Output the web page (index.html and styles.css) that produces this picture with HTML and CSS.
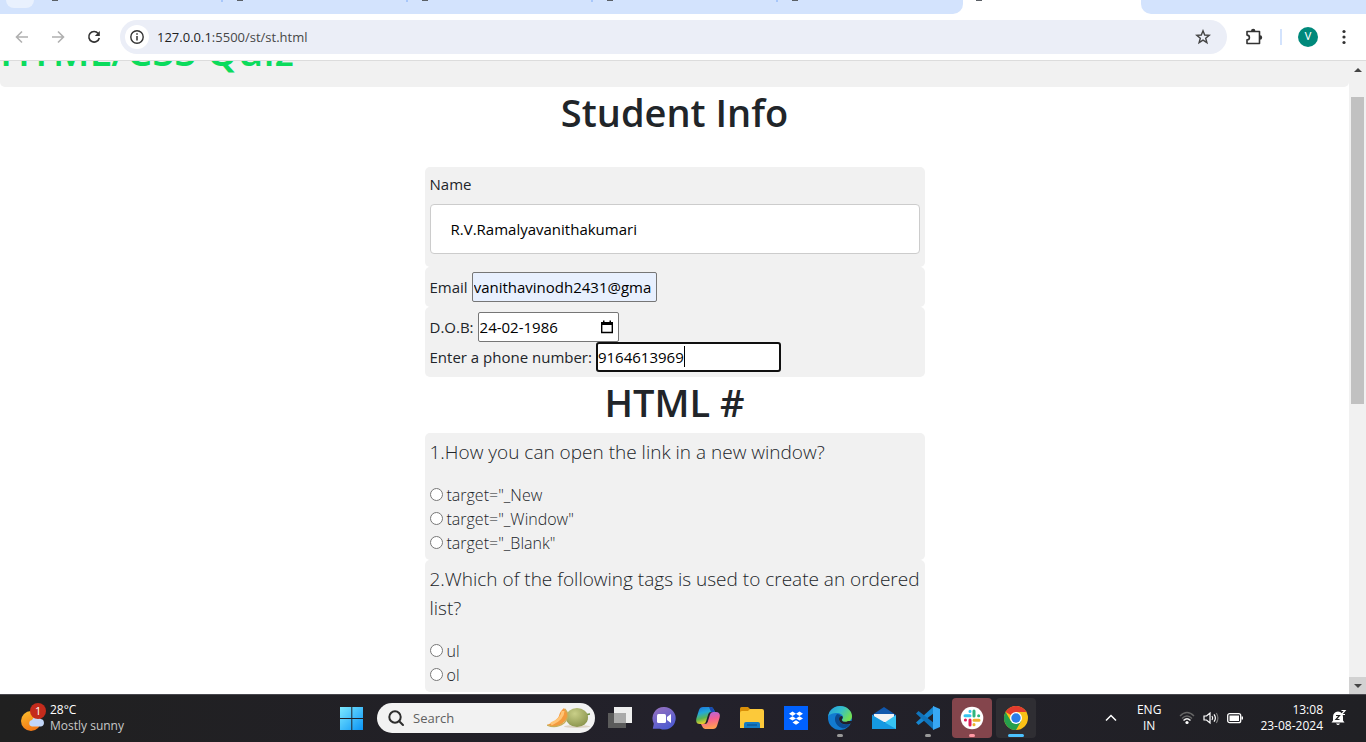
FILE: index.html
```html
<!DOCTYPE html>
<html lang="en">
<head>
<meta charset="utf-8">
<title>HTML/CSS Quiz</title>
<link rel="stylesheet" href="styles.css">
</head>
<body>
<div class="desktop">
  <div class="tabstrip">
    <span class="tab-search"></span>
    <div class="tabs">
      <span class="tab"></span><span class="tab"></span><span class="tab"></span><span class="tab"></span><span class="tab tab-last"></span>
    </div>
    <span class="tab-active"></span>
    <span class="tab-rest"></span>
  </div>
  <div class="toolbar">
    <button class="tool" aria-label="Back"><svg width="16" height="16" viewBox="0 0 16 16" fill="none" stroke="#b0b0b0" stroke-width="1.6"><path d="M14 8H3M8 2.5 2.5 8 8 13.5"/></svg></button>
    <button class="tool" aria-label="Forward"><svg width="16" height="16" viewBox="0 0 16 16" fill="none" stroke="#b0b0b0" stroke-width="1.6"><path d="M2 8h11M8 2.5 13.5 8 8 13.5"/></svg></button>
    <button class="tool" aria-label="Reload"><svg width="16" height="16" viewBox="0 0 16 16"><path d="M12.2 4.4A5.300 5.300 0 1 0 13.300 9" fill="none" stroke="#333" stroke-width="1.600"/><path d="M13.800 2v5H8.800z" fill="#333"/></svg></button>
    <div class="omnibox">
      <button class="site-info" aria-label="Site information"><svg width="16" height="16" viewBox="0 0 16 16"><circle cx="8" cy="8" r="6.200" fill="none" stroke="#333" stroke-width="1.400"/><path d="M8 7v4.500M8 4.300v1.500" stroke="#333" stroke-width="1.500"/></svg></button>
      <div class="url"><span class="host">127.0.0.1</span>:5500/st/st.html</div>
      <button class="star" aria-label="Bookmark"><svg width="16" height="16" viewBox="0 0 16 16"><path d="m8 1.800 1.700 4.200 4.500.3-3.500 2.900 1.200 4.500L8 11.200l-3.900 2.500 1.200-4.500-3.500-2.900 4.500-.3z" fill="none" stroke="#444" stroke-width="1.400"/></svg></button>
    </div>
    <button class="tool ext" aria-label="Extensions"><svg width="18" height="18" viewBox="0 0 18 18"><path d="M2 3.500h12.500v12H2v-3.600c3.200 0 3.200-4.800 0-4.800z" fill="none" stroke="#333" stroke-width="1.600" stroke-linejoin="round"/><path d="M6 3a2.200 2.200 0 0 1 4.400 0zM15 7.300a2.200 2.200 0 0 1 0 4.400z" fill="#333"/></svg></button>
    <span class="divider"></span>
    <button class="avatar" aria-label="Profile">V</button>
    <button class="tool menu" aria-label="Menu"><svg width="16" height="16" viewBox="0 0 16 16" fill="#333"><circle cx="8" cy="2.500" r="1.600"/><circle cx="8" cy="8" r="1.600"/><circle cx="8" cy="13.500" r="1.600"/></svg></button>
  </div>

  <div class="viewport">
    <main class="page">
      <header class="banner"><h1 class="banner-title">HTML/CSS Quiz</h1></header>
      <h1 class="heading heading-info">Student Info</h1>
      <form class="quiz">
        <div class="panel">
          <label class="line" for="name">Name</label>
          <input class="name" id="name" type="text" value="R.V.Ramalyavanithakumari">
        </div>
        <div class="panel">
          <div class="row"><label for="email">Email</label><input class="field email" id="email" type="text" value="vanithavinodh2431@gma"></div>
        </div>
        <div class="panel">
          <div class="row"><label for="dob">D.O.B:</label>
            <span class="field date"><input class="date-text" id="dob" type="text" value="24-02-1986"><button class="date-pick" type="button" aria-label="Open calendar"><svg width="14" height="14" viewBox="0 0 14 14"><path d="M1.700 3.500h10.600v9H1.700z" fill="none" stroke="#000" stroke-width="1.400"/><path d="M1 2h12v3H1zM3 .5h1.500V2H3zM9.500.5H11V2H9.500z"/></svg></button></span>
          </div>
          <div class="row"><label for="phone">Enter a phone number:</label><span class="phone-box"><input class="field phone" id="phone" type="text" value="9164613969"><span class="caret"></span></span></div>
        </div>
        <h1 class="heading">HTML #</h1>
        <div class="panel">
          <p class="question">1.How you can open the link in a new window?</p>
          <label class="option"><input class="radio" type="radio" name="q1">target="_New</label>
          <label class="option"><input class="radio" type="radio" name="q1">target="_Window"</label>
          <label class="option"><input class="radio" type="radio" name="q1">target="_Blank"</label>
        </div>
        <div class="panel">
          <p class="question">2.Which of the following tags is used to create an ordered list?</p>
          <label class="option"><input class="radio" type="radio" name="q2">ul</label>
          <label class="option"><input class="radio" type="radio" name="q2">ol</label>
        </div>
      </form>
    </main>
    <div class="scrollbar">
      <span class="arrow"><svg width="8" height="4" viewBox="0 0 8 4"><path d="M4 0l4 4H0z" fill="#444"/></svg></span>
      <div class="track"><span class="thumb"></span></div>
      <span class="arrow arrow-down"><svg width="8" height="4" viewBox="0 0 8 4"><path d="M0 0h8L4 4z" fill="#444"/></svg></span>
    </div>
  </div>

  <footer class="taskbar">
    <div class="weather">
      <svg width="26" height="30" viewBox="0 0 26 30"><defs><linearGradient id="sun" x2="0.400" y2="1"><stop stop-color="#fbbf2d"/><stop offset="1" stop-color="#f47a16"/></linearGradient></defs><circle cx="10" cy="18" r="10" fill="url(#sun)"/><path d="M11 23.500a3.300 3.300 0 0 1 0-6.500 4.500 4.500 0 0 1 8-1 3.800 3.800 0 0 1 1 7.500z" fill="#c3d7f8"/><circle cx="17" cy="8" r="8" fill="#c42b1c"/><text x="14" y="12" class="badge-text">1</text></svg>
      <div class="weather-text"><span class="temp">28°C</span><span class="sky">Mostly sunny</span></div>
    </div>
    <div class="apps">
      <button class="app" aria-label="Start"><svg width="24" height="24" viewBox="0 0 24 24"><defs><linearGradient id="win" x2="1" y2="1"><stop stop-color="#7deaff"/><stop offset="1" stop-color="#0a94f5"/></linearGradient></defs><path d="M0 1h11.300v11H0zM12.300 1H23v11H12.300zM0 13h11.300v11H0zM12.300 13H23v11H12.300z" fill="url(#win)"/></svg></button>
      <div class="search">
        <svg width="18" height="18" viewBox="0 0 18 18" fill="none" stroke="#2d2d2d" stroke-width="2" stroke-linecap="round"><circle cx="8" cy="8" r="5.700"/><path d="m12.200 12.200 3.800 3.800"/></svg>
        <input class="search-input" type="text" aria-label="Search" placeholder="Search">
        <svg width="44" height="22" viewBox="0 0 44 22"><defs><radialGradient id="melon" cx=".4" cy=".3" r=".8"><stop stop-color="#c9cf88"/><stop offset="1" stop-color="#858f48"/></radialGradient></defs><ellipse cx="30" cy="19.500" rx="13" ry="1.500" fill="#ddd3c5"/><path d="M38 9q2-2 5-2" fill="none" stroke="#6b8a43" stroke-width="1.600"/><ellipse cx="30" cy="10.500" rx="11" ry="9.500" fill="url(#melon)"/><path d="M17 1q7 7 0 14-7 7-17 3 10-4 12-9 1-5 5-8z" fill="#f39a3e"/><path d="M16 4q0 8-12 13" fill="none" stroke="#ffc475" stroke-width="3"/><path d="M0 18q9 4 17-2 7-7 1-14" fill="none" stroke="#c7ae58" stroke-width="1.200"/></svg>
      </div>
      <button class="app" aria-label="Task view"><svg width="24" height="24" viewBox="0 0 24 24"><path d="M6 1h18v16H6z" fill="#eee"/><path d="M0 7h18v15H0z" fill="#5b5b5b"/><path d="M6 7h12v10H6z" fill="#aaa"/></svg></button>
      <button class="app" aria-label="Chat"><svg width="24" height="24" viewBox="0 0 24 24"><defs><linearGradient id="chat" x2="0.500" y2="1"><stop stop-color="#9b72bd"/><stop offset="1" stop-color="#4f5bd0"/></linearGradient></defs><path d="M12 1a11.300 11.300 0 1 1-4 21.700H.8l1-5A11.300 11.300 0 0 1 12 1z" fill="url(#chat)"/><rect x="5" y="8" width="9" height="9" rx="1.500" fill="#fff"/><path d="m15 11 4-3v9l-4-3z" fill="#fff"/></svg></button>
      <button class="app" aria-label="Copilot"><svg width="24" height="24" viewBox="0 0 24 24"><defs><linearGradient id="cpa" x2="0.300" y2="1"><stop stop-color="#1b70dd"/><stop offset=".4" stop-color="#23a9d7"/><stop offset=".7" stop-color="#5cb551"/><stop offset="1" stop-color="#f1cf28"/></linearGradient><linearGradient id="cpb" x2="0.200" y2="1"><stop stop-color="#a667ec"/><stop offset=".5" stop-color="#f45f94"/><stop offset="1" stop-color="#ff9d53"/></linearGradient></defs><path d="M7 1h8q2 0 3 3l1 2h-4q-2 0-2.700 2L10 15.500Q9.500 18 7 18H4q-5 0-3.500-6L3 4q1-3 4-3z" fill="url(#cpa)"/><path d="M17 23H9q-2 0-3-3l-1-2h4q2 0 2.700-2L14 8.500Q14.500 6 17 6h3q5 0 3.500 6L21 20q-1 3-4 3z" fill="url(#cpb)"/><path d="M13 1h2q2 0 3 3l1 2h-4z" fill="#1b49b0"/></svg></button>
      <button class="app" aria-label="File Explorer"><svg width="24" height="24" viewBox="0 0 24 24"><path d="M0 2.500Q0 1 1.500 1H8l2 2v4H0z" fill="#d98f08"/><path d="M0 7q0-2 2-2h6l2-2h12q2 0 2 2v17H0z" fill="#fcc93a"/><path d="M4 22v-4q0-2 2-2h12q2 0 2 2v4z" fill="#147bc4"/><path d="M7 19h10" stroke="#0c599b" stroke-width="1.500"/></svg></button>
      <button class="app" aria-label="Dropbox"><svg width="24" height="24" viewBox="0 0 24 24"><path d="M0 0h24v24H0z" fill="#0061fe"/><path d="m8.500 5.500 3.500 2.200-3.500 2.200L5 7.700zM15.500 5.500 19 7.700l-3.500 2.200L12 7.700zM8.500 10.200l3.500 2.200-3.500 2.200L5 12.400zM15.500 10.200l3.500 2.200-3.500 2.200-3.500-2.200zM12 14.300l3.500 2.200L12 18.700l-3.500-2.200z" fill="#fff"/></svg></button>
      <button class="app running" aria-label="Edge"><svg width="24" height="24" viewBox="0 0 24 24"><defs><linearGradient id="edge" x1="0" y1="0" x2="1" y2=".5"><stop stop-color="#249bdf"/><stop offset=".55" stop-color="#35bfc9"/><stop offset="1" stop-color="#72df54"/></linearGradient></defs><circle cx="12" cy="12" r="12" fill="#127bd0"/><path d="M0 11C1 4 6 0 12 0c7 0 12 5 12 10 0 4-3 6-6 6-3 0-4-1-4-2 0-1 1-1 1-3 0-2-3-4-6-4-4 0-8 1-9 4z" fill="url(#edge)"/><path d="M9 8c-4 4-2 12 5 14 3 1 6-1 8-4-6 2-11-1-11-5 0-2 1-3 2-3q-1-2-4-2z" fill="#0b4b91"/><path d="M11 13c0 4 5 7 12 4.500l1.500-2.500H20c-4 2-7 0-6-2 1-1 1-2 0-3-2 0-3 1-3 3z" fill="#22202a"/></svg></button>
      <button class="app" aria-label="Mail"><svg width="24" height="24" viewBox="0 0 24 24"><path d="M0 9 12 1l12 8v3H0z" fill="#1057ac"/><path d="M2 8h20v8H2z" fill="#f1f1f3"/><path d="M0 9v14h24V9l-12 8z" fill="#36c4f3"/><path d="m0 9 24 14H0z" fill="#1599e1"/></svg></button>
      <button class="app running" aria-label="Visual Studio Code"><svg width="24" height="24" viewBox="0 0 24 24"><path d="m18 0-18 16.500L2.500 19 18 7z" fill="#1686d0"/><path d="m18 24-18-16.500L2.500 5 18 17z" fill="#1074bb"/><path d="m17 0 7 3v18l-7 3z" fill="#38a8f4"/></svg></button>
      <button class="app running slack" aria-label="Slack"><svg width="24" height="24" viewBox="0 0 24 24" stroke-width="3" stroke-linecap="round"><circle cx="12" cy="12" r="11.300" fill="#fff"/><path d="M10 5.300v.1M5 9.800h5" stroke="#36c5f0"/><path d="M14 5v5M18.600 9.800h.1" stroke="#2eb67d"/><path d="M10 14v5M5.400 14.100h.1" stroke="#e01e5a"/><path d="M14 14.200h5M14 18.600v.1" stroke="#ecb22e"/></svg></button>
      <button class="app running current" aria-label="Chrome"><svg width="24" height="24" viewBox="0 0 24 24"><circle cx="12" cy="12" r="12" fill="#fbc116"/><path d="M12 12 1.600 6A12 12 0 0 1 22.400 6z" fill="#e33b2e"/><path d="M1.600 6A12 12 0 0 0 12 24l5.200-9H6.800z" fill="#269f4c"/><path d="M12 6h10.400l-5 9z" fill="#fbc116"/><circle cx="12" cy="12" r="6" fill="#fff"/><circle cx="12" cy="12" r="4.700" fill="#2b7de9"/></svg></button>
    </div>
    <div class="tray">
      <button class="tray-item" aria-label="Show hidden icons"><svg width="12" height="8" viewBox="0 0 12 8" fill="none" stroke="#fff" stroke-width="1.500"><path d="m1 6.500 5-5 5 5"/></svg></button>
      <div class="lang"><span>ENG</span><span>IN</span></div>
      <div class="status">
        <svg width="16" height="14" viewBox="0 0 16 14" fill="none" stroke-width="1.400"><path d="M1 5q7-7 14 0M3 7.500q5-5 10 0" stroke="#666"/><path d="M4.500 9.500q3.500-3.500 7 0" stroke="#eee"/><circle cx="8" cy="11.500" r="1.600" fill="#fff"/></svg>
        <svg width="16" height="14" viewBox="0 0 16 14" fill="none" stroke="#fff" stroke-width="1.200"><path d="M1 5h2.500L7 2v10L3.500 9H1zM9 5q1.500 2 0 4M11 3.300q2.800 3.700 0 7.400"/><path d="M13.300 2q3.200 5 0 10" stroke="#777"/></svg>
        <svg width="16" height="14" viewBox="0 0 16 14"><rect x=".7" y="2.700" width="13" height="9" rx="2" fill="none" stroke="#fff" stroke-width="1.300"/><path d="M2.500 4.500h9.500v5.400H2.500zM14.500 5.500h1.500v3h-1.500z" fill="#fff"/></svg>
      </div>
      <div class="clock"><span>13:08</span><span>23-08-2024</span></div>
      <button class="tray-item" aria-label="Notifications"><svg width="16" height="18" viewBox="0 0 16 18"><path d="M2 8q0-5 5-5.500 5 .5 5 5.500v3.500l1.500 2H.5l1.500-2zM5 14.500h4q-2 3-4 0z" fill="#fff"/><path d="M5 6.500h3.500L5 10.500h3.500" fill="none" stroke="#222" stroke-width="1.200"/><path d="M10.500 1.500H14l-3.500 4H14" fill="none" stroke="#fff" stroke-width="1.200"/></svg></button>
    </div>
  </footer>
</div>
</body>
</html>
```

FILE: styles.css
```css
* { box-sizing: border-box; }
body {
  margin: 0;
  color: #212529;
  font: 15px/24px "Open Sans", "Noto Sans", sans-serif;
}
button {
  display: flex;
  align-items: center;
  justify-content: center;
  padding: 0;
  border: 0;
  background: none;
}
input { font: inherit; color: #000; }
svg { display: block; flex: none; }
.desktop {
  display: flex;
  flex-direction: column;
  height: 100vh;
  overflow: hidden;
}

/* Browser chrome */
.tabstrip {
  display: flex;
  flex: none;
  height: 14px;
  background: #fff;
}
.tab-search {
  width: 28px;
  height: 8px;
  margin-left: 6px;
  border-radius: 0 0 10px 10px;
  background: #e9f1fe;
  box-shadow: 0 0 0 20px #d3e3fd;
  clip-path: inset(-20px 0 -6px -6px);
}
.tabs {
  display: flex;
  width: 929px;
  padding-left: 4px;
  border-bottom-right-radius: 10px;
  background: #d3e3fd;
}
.tab {
  width: 185px;
  height: 2px;
  padding-left: 14px;
  border-right: 2px solid #a8c7fa;
}
.tab::before, .tab-active::before {
  content: "";
  display: block;
  width: 6px;
  height: 1px;
  background: #5b6066;
}
.tab-last { border-right: 0; }
.tab-active { width: 178px; padding-left: 13px; }
.tab-rest {
  flex: 1;
  border-bottom-left-radius: 10px;
  background: #d3e3fd;
}
.toolbar {
  display: flex;
  flex: none;
  align-items: center;
  height: 47px;
  padding: 0 14px;
  border-bottom: 1px solid #dcdcdc;
  background: #fff;
}
.tool { width: 16px; height: 34px; margin-right: 20px; }
.omnibox {
  display: flex;
  flex: 1;
  align-items: center;
  height: 34px;
  margin-left: -2px;
  padding: 0 16px 0 5px;
  border-radius: 17px;
  background: #ebeef7;
}
.site-info { width: 24px; height: 24px; border-radius: 50%; background: #fff; }
.url {
  flex: 1;
  padding-left: 8px;
  color: #474747;
  font: 13px/20px "Open Sans", sans-serif;
}
.host { color: #1f1f1f; }
.ext { width: 18px; margin: 0 17px 0 18px; }
.divider { width: 2px; height: 16px; background: #d3e3fd; }
.avatar {
  width: 20px;
  height: 20px;
  margin: 0 18px 0 16px;
  border-radius: 50%;
  background: #00897b;
  color: #fff;
  font: 11px/20px Roboto, sans-serif;
}
.menu { margin-right: 0; }

/* Page */
.viewport { display: flex; flex: 1; min-height: 0; background: #fff; }
.page { flex: 1; overflow: hidden; }
.banner {
  display: flex;
  align-items: flex-end;
  height: 26px;
  padding: 0 0 12px;
  overflow: hidden;
  border-radius: 0 0 5px 5px;
  background: #f1f1f1;
}
.banner-title {
  margin: 0;
  color: #0bdb5c;
  font-size: 40px;
  font-weight: 600;
  line-height: 48px;
}
.heading {
  margin: 0 0 6px;
  font-size: 38px;
  font-weight: 600;
  line-height: 50px;
  text-align: center;
}
.heading-info { margin-bottom: 30px; }
.quiz { width: 500px; max-width: 100%; margin: 0 auto; }
.panel { padding: 5px; border-radius: 5px; background: #f1f1f1; }
.line { display: block; }
.name {
  display: block;
  width: 100%;
  height: 50px;
  margin: 8px 0;
  padding: 12px 20px;
  border: 1px solid #ccc;
  border-radius: 4px;
}
.row { display: flex; align-items: center; gap: 4px; }
.field {
  width: 185px;
  height: 30px;
  padding: 1px;
  border: 1px solid #767676;
  border-radius: 2px;
  background: #fff;
}
.email { background: #e8f0fe; }
.date { display: flex; width: 141px; padding-right: 4px; }
.date-text {
  flex: 1;
  min-width: 0;
  padding: 0;
  border: 0;
  background: none;
}
.phone-box { position: relative; }
.phone { display: block; border: 2px solid #101010; border-radius: 3px; padding: 0; }
.caret {
  position: absolute;
  top: 4px;
  left: 88px;
  width: 1px;
  height: 21px;
  background: #000;
}
.question { margin: 0 0 16px; font-size: 19px; font-weight: 300; line-height: 29px; }
.option {
  display: flex;
  align-items: center;
  height: 24px;
  gap: 4px;
  font-size: 16px;
  font-weight: 300;
}
.radio { width: 13px; height: 13px; margin: 0 0 2px; }

.scrollbar {
  display: flex;
  flex-direction: column;
  width: 17px;
  background: #f1f1f1;
}
.arrow { display: grid; place-items: center; height: 17px; }
.arrow-down { background: #d2d2d2; }
.track { flex: 1; padding: 19px 2px 0; }
.thumb { display: block; height: 53%; background: #c1c1c1; }

/* Taskbar */
.taskbar {
  display: grid;
  flex: none;
  grid-template-columns: 1fr auto 1fr;
  align-items: center;
  height: 48px;
  padding: 0 0 2px 2px;
  border-top: 1px solid #48474d;
  background: linear-gradient(90deg, #202020, #23212b 50%, #202024);
  color: #fff;
  font-size: 12px;
  line-height: 16px;
}
.weather { display: flex; align-items: center; gap: 3px; padding-left: 19px; }
.weather-text, .lang, .clock { display: flex; flex-direction: column; }
.sky { color: #c8c8c8; }
.badge-text { fill: #fff; font-size: 11px; }
.apps { display: flex; align-items: center; gap: 4px; }
.app { position: relative; width: 40px; height: 40px; border-radius: 4px; }
.search {
  display: flex;
  align-items: center;
  width: 218px;
  height: 30px;
  margin: 0 1px;
  padding: 0 4px 0 10px;
  border-radius: 15px;
  background: #f2f2f2;
}
.search-input {
  flex: 1;
  min-width: 0;
  padding: 0 8px;
  border: 0;
  background: none;
  font-size: 13px;
}
.search-input::placeholder { color: #606060; opacity: 1; }
.running::after {
  content: "";
  position: absolute;
  bottom: 1px;
  left: 17px;
  width: 6px;
  height: 3px;
  border-radius: 2px;
  background: #999;
}
.slack { background: #84454c; }
.slack::after { background: #ff99a4; }
.current { background: #2f2e33; }
.current::after { left: 12px; width: 16px; background: #4cc2ff; }
.tray { display: flex; align-items: center; justify-content: flex-end; padding-right: 19px; }
.lang { margin: 0 18px 0 20px; align-items: center; }
.status { display: flex; gap: 8px; }
.clock { margin: 0 8px 0 17px; align-items: flex-end; }
```
